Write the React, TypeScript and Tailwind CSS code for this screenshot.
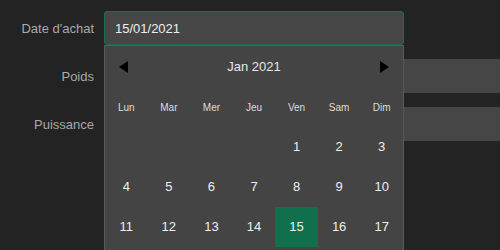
import React from 'react';

const weekdays = ['Lun', 'Mar', 'Mer', 'Jeu', 'Ven', 'Sam', 'Dim'];
const days: (number | null)[] = [null, null, null, null, 1, 2, 3, 4, 5, 6, 7, 8, 9, 10, 11, 12, 13, 14, 15, 16, 17];

function Calendar() {
    return (
        <div className="absolute left-0 top-[34px] w-[300px] h-[220px] border border-[#5a5a5a] bg-[#444444] z-10">
            <div className="flex items-center justify-between h-[42px] px-[14px]">
                <svg width="9" height="12" viewBox="0 0 9 12"><polygon points="9,0 9,12 0,6" fill="#000" /></svg>
                <span className="text-[13px] text-[#e6e6e6]">Jan 2021</span>
                <svg width="9" height="12" viewBox="0 0 9 12"><polygon points="0,0 0,12 9,6" fill="#000" /></svg>
            </div>
            <div className="grid grid-cols-7 h-[39px] items-center">
                {weekdays.map((d) => (
                    <span key={d} className="text-center text-[10px] text-[#dddddd]">{d}</span>
                ))}
            </div>
            <div className="grid grid-cols-7 auto-rows-[40px]">
                {days.map((d, i) => (
                    <div
                        key={i}
                        className={
                            d === 15
                                ? 'flex items-center justify-center text-[13px] text-[#eeeeee] bg-[#11704c]'
                                : 'flex items-center justify-center text-[13px] text-[#eeeeee]'
                        }
                    >
                        {d}
                    </div>
                ))}
            </div>
        </div>
    );
}

export default function App() {
    return (
        <div className="w-[500px] h-[250px] overflow-hidden bg-[#232323] pt-[11px] font-['Liberation_Sans',Arial,sans-serif]">
            <div className="flex flex-col gap-[14px]">
                <div className="flex items-center">
                    <label className="shrink-0 w-[94px] pt-px text-right text-[13px] text-[#a9a9a9]">Date d'achat</label>
                    <div className="relative shrink-0 ml-[10px]">
                        <div className="w-[300px] h-[34px] flex items-center pt-px px-[10px] rounded-[3px] border border-[#1b6d4f] bg-[#464646] text-[13px] text-[#eeeeee]">
                            15/01/2021
                        </div>
                        <Calendar />
                    </div>
                </div>
                <div className="flex items-center">
                    <label className="shrink-0 w-[94px] pt-px text-right text-[13px] text-[#a9a9a9]">Poids</label>
                    <div className="shrink-0 ml-[10px] w-[420px] h-[34px] bg-[#464646]" />
                </div>
                <div className="flex items-center">
                    <label className="shrink-0 w-[94px] pt-px text-right text-[13px] text-[#a9a9a9]">Puissance</label>
                    <div className="shrink-0 ml-[10px] w-[420px] h-[34px] bg-[#464646]" />
                </div>
            </div>
        </div>
    );
}
